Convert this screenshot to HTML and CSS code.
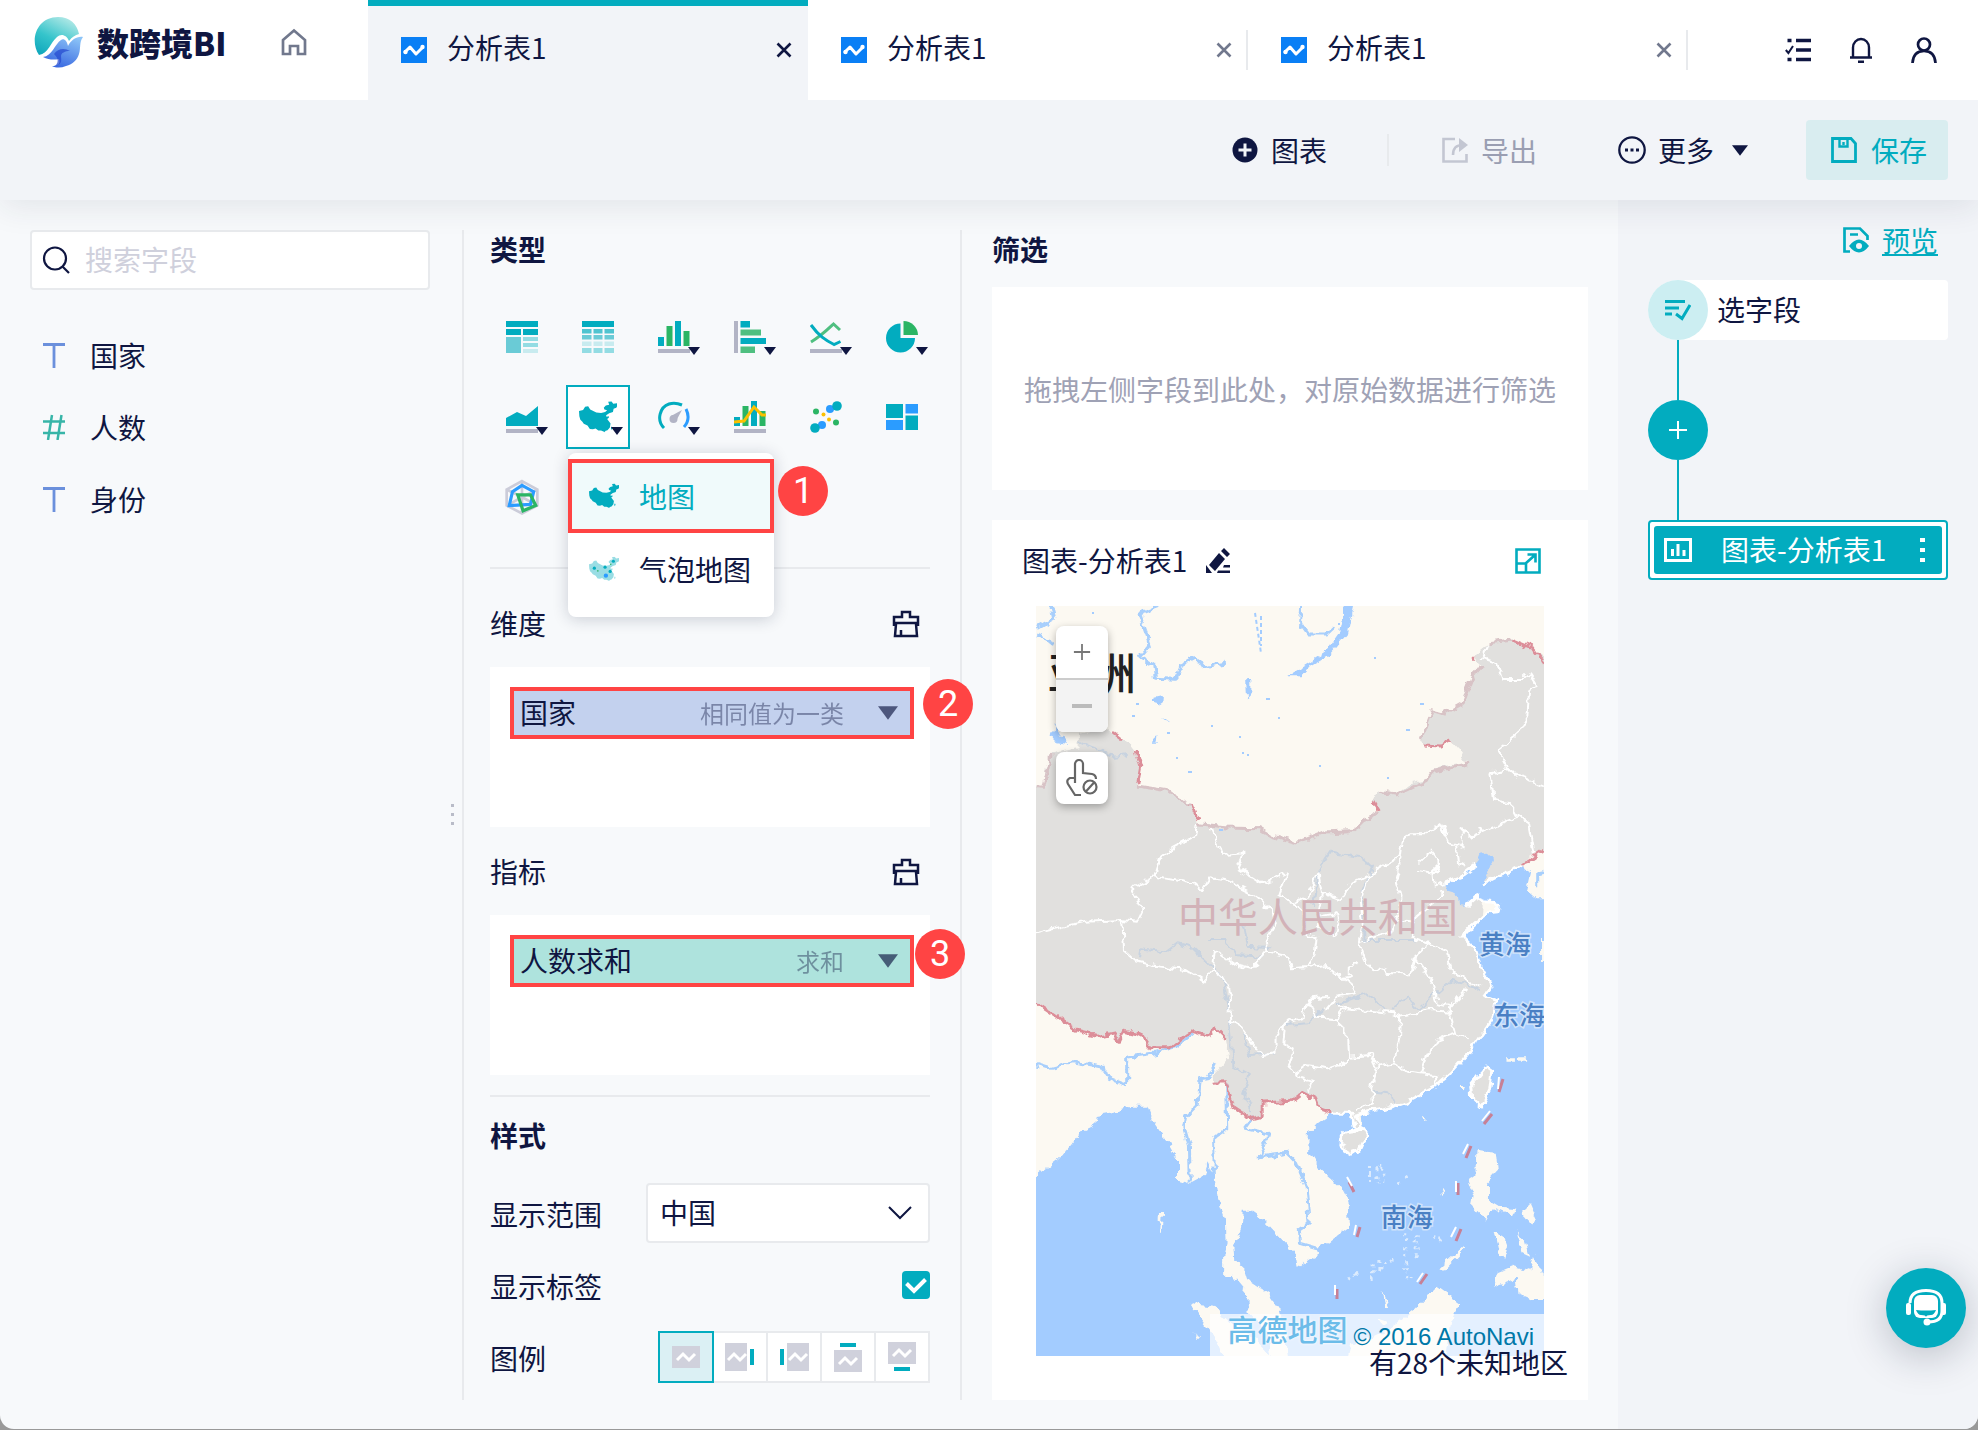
FILE: index.html
```html
<!DOCTYPE html>
<html lang="zh-CN">
<head>
<meta charset="utf-8">
<meta name="viewport" content="width=device-width, initial-scale=1">
<title>数跨境BI - 分析表1</title>
<link rel="stylesheet" href="styles.css">
</head>
<body>
<svg class="defs" aria-hidden="true">
  <defs>
    <symbol id="i-sheet" viewBox="0 0 26 26"><path fill="#0a7ff5" d="M0 0h26v26H0z"/><path d="M4 15l5-5 6 7 6-6" fill="none" stroke="#fff" stroke-width="3" stroke-linecap="round" stroke-linejoin="round"/><circle cx="4.500" cy="15" r="2.200" fill="#fff"/><circle cx="21.500" cy="10" r="2.200" fill="#fff"/></symbol>
    <symbol id="i-close" viewBox="0 0 16 16"><path d="M1.500 1.500l13 13M14.500 1.500l-13 13" fill="none" stroke="currentColor" stroke-width="2.600"/></symbol>
    <symbol id="i-caret" viewBox="0 0 12 8"><path d="M0 0h12L6 8z" fill="currentColor"/></symbol>
    <symbol id="i-china" viewBox="328 545 112 92"><path d="M328 573l12-3 6-9 9-2 6 10 18 9 14 1 12-3 6-5-8-2-2-5 6-7 10-2-3-9 10-1 5 7 12-2 1 6-4 8-8 3-2 9-11 4-9 6 1 4 7-1 0 4-5 4 10 13-2 12-7 8-12 4-7-3-8 0-8-6-8 2-9-1-7-10-11-5-4-6-6-6-3-10zM398 628l7-2 3 5-6 5zM424 619l3 2-2 8-3-4z"/></symbol>
    <symbol id="i-brush" viewBox="0 0 28 28"><path d="M2 16V7h8V2h8v5h8v9M2 13h24M4 14L3 26h22l-1-12M9 26v-6" fill="none" stroke="currentColor" stroke-width="2.500"/></symbol>
    <symbol id="i-plus" viewBox="0 0 20 20"><path d="M10 1v18M1 10h18" fill="none" stroke="currentColor" stroke-width="2"/></symbol>
  </defs>
</svg>

<div class="app">
  <header class="topbar">
    <a class="brand" href="#" aria-label="数跨境BI">
      <svg class="brand-mark" viewBox="0 0 52 52">
        <defs>
          <linearGradient id="g1" x1="0.8" y1="0" x2="0.2" y2="1"><stop offset="0" stop-color="#b9ebe8"/><stop offset="0.6" stop-color="#35c4cb"/><stop offset="1" stop-color="#12a9bd"/></linearGradient>
          <linearGradient id="g2" x1="0.8" y1="0" x2="0.3" y2="1"><stop offset="0" stop-color="#8cc4f7"/><stop offset="1" stop-color="#3766e0"/></linearGradient>
        </defs>
        <path d="M6 39C-4 24 4 1 25 1c12 0 19 7 21 17-4 1-7 3-10 7-2-6-8-8-12-4-7 6-8 16-18 18z" fill="url(#g1)"/>
        <path d="M10 41c9-1 12-13 18-17 3-2 6 1 7 6 3-6 9-10 15-9-4 5-2 11-4 17-2 6-6 10-13 12-5 2-10 2-14 0 5 0 9-2 7-7-5 1-10 1-16-2z" fill="url(#g2)"/>
        <path d="M21 38c4-6 11-6 16-3-5 0-9 2-9 5 0 4 2 8-6 10 5-5 2-9-1-12z" fill="#2347cf" opacity="0.700"/>
      </svg>
      <span class="brand-name">数跨境BI</span>
    </a>
    <a class="home" href="#" aria-label="首页"><svg width="26" height="28" viewBox="0 0 26 28"><path d="M2 12L13 2.500 24 12v14h-7v-8H9v8H2z" fill="none" stroke="#71788d" stroke-width="2.700"/></svg></a>
    <nav class="tabs">
      <div class="tab is-active"><svg class="ic26"><use href="#i-sheet"/></svg><a href="#">分析表1</a><button type="button" aria-label="关闭"><svg width="16" height="16"><use href="#i-close"/></svg></button></div>
      <div class="tab"><svg class="ic26"><use href="#i-sheet"/></svg><a href="#">分析表1</a><button type="button" aria-label="关闭"><svg width="16" height="16"><use href="#i-close"/></svg></button></div>
      <div class="tab"><svg class="ic26"><use href="#i-sheet"/></svg><a href="#">分析表1</a><button type="button" aria-label="关闭"><svg width="16" height="16"><use href="#i-close"/></svg></button></div>
    </nav>
    <div class="account">
      <button type="button" aria-label="任务"><svg class="ic26" viewBox="0 0 26 26"><path d="M11 3.500h15M11 13h15M11 22.500h15" stroke="currentColor" stroke-width="3.600"/><path d="M2.500 3.500h4M2.500 22.500h4" stroke="currentColor" stroke-width="3.600"/><path d="M.8 13l2.600 3L8 9" fill="none" stroke="currentColor" stroke-width="2"/></svg></button>
      <button type="button" aria-label="通知"><svg class="ic26" viewBox="0 0 26 26"><path d="M5 20V10.500a8 8.500 0 0 1 16 0V20M2 20.500h22M10 24.700h6" fill="none" stroke="currentColor" stroke-width="2.400"/></svg></button>
      <button type="button" aria-label="用户"><svg class="ic26" viewBox="0 0 26 26"><circle cx="13" cy="7.500" r="6" fill="none" stroke="currentColor" stroke-width="2.700"/><path d="M1.500 26c.5-8 5-12 11.500-12s11 4 11.500 12" fill="none" stroke="currentColor" stroke-width="2.700"/></svg></button>
    </div>
  </header>

  <div class="toolbar">
    <button type="button" class="tool"><svg class="ic26" viewBox="0 0 26 26"><circle cx="13" cy="13" r="12.500" fill="currentColor"/><path d="M13 6.500v13M6.500 13h13" stroke="#f2f4f8" stroke-width="3"/></svg>图表</button>
    <span class="tool-rule"></span>
    <button type="button" class="tool tool-off" disabled><svg class="ic26" viewBox="0 0 26 26"><path d="M13 2H1.500v22.500h23V17" fill="none" stroke="#c3c6d2" stroke-width="2.600"/><path d="M11 18c0-7 3-10 10-10" fill="none" stroke="#c3c6d2" stroke-width="2.600"/><path d="M17 1l9 7-9 7z" fill="#c3c6d2"/></svg>导出</button>
    <button type="button" class="tool tool-more"><svg width="28" height="28" viewBox="0 0 28 28"><circle cx="14" cy="14" r="12.700" fill="none" stroke="currentColor" stroke-width="2.300"/><path d="M7 14h3M12.500 14h3M18 14h3" stroke="currentColor" stroke-width="3"/></svg>更多<svg class="more-caret" width="16" height="11"><use href="#i-caret"/></svg></button>
    <button type="button" class="save"><svg class="ic26" viewBox="0 0 26 26"><path d="M1.500 1.500H20l4.500 5V24.500h-23z" fill="none" stroke="currentColor" stroke-width="2.800"/><path d="M8.500 2v7.500h8V2M12.500 5v3" fill="none" stroke="currentColor" stroke-width="2.400"/></svg>保存</button>
  </div>

  <main class="work">
    <aside class="fields">
      <label class="search"><svg width="28" height="28" viewBox="0 0 28 28"><circle cx="13" cy="12.500" r="11" fill="none" stroke="currentColor" stroke-width="2.200"/><path d="M20.500 20.500l6.500 6.500" stroke="currentColor" stroke-width="2.200"/></svg><input type="text" placeholder="搜索字段" aria-label="搜索字段"></label>
      <ul class="field-list">
        <li><svg class="fi fi-t" viewBox="0 0 22 26"><path d="M0 2.500h22M11 2v24" stroke="currentColor" stroke-width="2.800"/></svg>国家</li>
        <li><svg class="fi fi-n" viewBox="0 0 22 26"><path d="M0 7.500h22M0 19h22M9 1L5 26M18.500 1l-4 25" stroke="currentColor" stroke-width="2.500"/></svg>人数</li>
        <li><svg class="fi fi-t" viewBox="0 0 22 26"><path d="M0 2.500h22M11 2v24" stroke="currentColor" stroke-width="2.800"/></svg>身份</li>
      </ul>
      <span class="grip"><i></i><i></i><i></i></span>
    </aside>
    <div class="rule"></div>

    <section class="config">
      <h2>类型</h2>
      <div class="types">
        <button type="button" aria-label="分组表"><svg class="ic32" viewBox="0 0 32 32"><path fill="#02acbf" d="M0 0h32v6H0zM0 8h15v6H0zM17 8h15v6H17z"/><path fill="#6acbd6" d="M0 16h15v16H0z"/><path fill="#93dce3" d="M17 16h15v4H17zM17 22h15v4H17z"/><path fill="#c8ebef" d="M17 28h15v4H17z"/></svg></button>
        <button type="button" aria-label="明细表"><svg class="ic32" viewBox="0 0 32 32"><path fill="#02acbf" d="M0 0h32v6H0z"/><path fill="#4fc4d0" d="M0 8h9.500v4.500H0zM11.500 8h9v4.500h-9zM22.500 8H32v4.500h-9.500z"/><path fill="#6acbd6" d="M0 14h9.500v4.500H0zM11.500 14h9v4.500h-9zM22.500 14H32v4.500h-9.500z"/><path fill="#c8ebef" d="M0 20.500h9.500V25H0zM11.500 20.500h9V25h-9zM22.500 20.500H32V25h-9.500z"/><path fill="#93dce3" d="M0 27h9.500v5H0zM11.500 27h9v5h-9zM22.500 27H32v5h-9.500z"/></svg></button>
        <button type="button" aria-label="柱状图"><svg class="ic32" viewBox="0 0 32 32"><path fill="#02acbf" d="M0 16h6v9H0zM17 0h6v25h-6z"/><path fill="#2bb564" d="M8.500 5h6v20h-6zM25.500 10h6v15h-6z"/><path fill="#b2b4c5" d="M0 28h32v4H0z"/></svg><svg class="dd"><use href="#i-caret"/></svg></button>
        <button type="button" aria-label="条形图"><svg class="ic32" viewBox="0 0 32 32"><path fill="#b2b4c5" d="M0 0h4v32H0z"/><path fill="#02acbf" d="M6.500 0H16v6.500H6.500zM6.500 17H32v6H6.500z"/><path fill="#4fbf80" d="M6.500 8.500H27v6H6.500zM6.500 25.500H21V32H6.500z"/></svg><svg class="dd"><use href="#i-caret"/></svg></button>
        <button type="button" aria-label="折线图"><svg class="ic32" viewBox="0 0 32 32"><path d="M1 21c10-6 14-10 22.500-18L30 9" fill="none" stroke="#4fbf80" stroke-width="3"/><path d="M1 4c8 11 14 15 23 19.500l6.500-3" fill="none" stroke="#02acbf" stroke-width="3"/><path fill="#b2b4c5" d="M0 28h32v4H0z"/></svg><svg class="dd"><use href="#i-caret"/></svg></button>
        <button type="button" aria-label="饼图"><svg class="ic32" viewBox="0 0 32 32"><path fill="#02acbf" d="M14.500 2.500a14.500 14.500 0 1 0 14.500 14.500H14.500z"/><path fill="#2bb564" d="M17.500 0A14.500 14.500 0 0 1 32 14H17.500z"/></svg><svg class="dd"><use href="#i-caret"/></svg></button>

        <button type="button" aria-label="面积图"><svg class="ic32" viewBox="0 0 32 32"><path fill="#02acbf" d="M0 17L11 11l9 4L32 5v20H0z"/><path fill="#b2b4c5" d="M0 28h32v4H0z"/></svg><svg class="dd"><use href="#i-caret"/></svg></button>
        <div class="type-open">
          <button type="button" class="is-on" aria-label="地图" aria-expanded="true"><svg class="china-lg"><use href="#i-china"/></svg><svg class="dd"><use href="#i-caret"/></svg></button>
          <div class="menu">
            <button type="button" class="menu-item marked"><svg class="china-sm"><use href="#i-china"/></svg>地图</button>
            <button type="button" class="menu-item"><svg class="china-sm" viewBox="328 545 112 92"><use href="#i-china" x="328" y="545" width="112" height="92" fill="#99dde4"/><circle cx="348" cy="588" r="6" fill="#02acbf"/><circle cx="419" cy="562" r="6" fill="#02acbf"/><circle cx="388" cy="584" r="6" fill="#02acbf"/><circle cx="407" cy="600" r="6" fill="#02acbf"/><circle cx="391" cy="616" r="8" fill="#2b9cff"/><circle cx="361" cy="598" r="3" fill="#2bb564"/><circle cx="409" cy="573" r="3" fill="#2bb564"/></svg>气泡地图</button>
            <span class="badge badge-1">1</span>
          </div>
        </div>
        <button type="button" aria-label="仪表盘"><svg class="ic32" viewBox="0 0 32 32"><path d="M6 27C-2 19 2 6 11 3q6-2 13 1" fill="none" stroke="#02acbf" stroke-width="3"/><path d="M28 8q5 10-2 18" fill="none" stroke="#2b9cff" stroke-width="3"/><path d="M13 15l11-6-6 11z" fill="#b2b4c5"/><circle cx="15.500" cy="18" r="4" fill="#b2b4c5"/></svg><svg class="dd"><use href="#i-caret"/></svg></button>
        <button type="button" aria-label="组合图"><svg class="ic32" viewBox="0 0 32 32"><path fill="#02acbf" d="M0 16h6v9H0zM17 0h6v25h-6z"/><path fill="#2bb564" d="M8.500 5h6v20h-6zM25.500 10h6v15h-6z"/><path d="M0 21l10-1L20 6l8 8h4" fill="none" stroke="#fbc000" stroke-width="3"/><path fill="#b2b4c5" d="M0 28h32v4H0z"/></svg></button>
        <button type="button" aria-label="散点图"><svg class="ic32" viewBox="0 0 32 32"><g fill="#2b9cff"><circle cx="20" cy="8" r="4"/><circle cx="12" cy="24" r="4"/></g><g fill="#02acbf"><circle cx="27" cy="5" r="4.800"/><circle cx="5" cy="27" r="4.800"/></g><g fill="#2bb564"><circle cx="6" cy="10.500" r="3"/><circle cx="26" cy="21.500" r="3"/></g><g fill="#fbc000"><circle cx="13.500" cy="13.500" r="2"/><circle cx="19" cy="18.500" r="2"/></g></svg></button>
        <button type="button" aria-label="矩形树图"><svg class="ic32" viewBox="0 0 32 32"><path fill="#02acbf" d="M0 3h17v14H0zM19.500 14.500H32V29H19.500z"/><path fill="#2b9cff" d="M19.500 3H32v9.500H19.500zM0 19h17v10H0z"/></svg></button>

        <button type="button" aria-label="雷达图"><svg class="radar" viewBox="0 0 32 34"><path d="M16 2l14.500 8v15L16 32.500 1.500 25V10zM16 2v15M1.500 10L16 17l14.500-7M16 17v15M16 17L2 25M16 17l14 8" fill="none" stroke="#cbccd9" stroke-width="2.500"/><path d="M16 6l11 6-3 12-20 1 3-13z" fill="none" stroke="#2b9cff" stroke-width="3"/><path d="M12 15h12l5 10-12 5z" fill="none" stroke="#2bb564" stroke-width="3"/></svg></button>
      </div>
      <hr class="hr-type">

      <div class="zone-head"><h3>维度</h3><button type="button" aria-label="清空维度"><svg width="28" height="28"><use href="#i-brush"/></svg></button></div>
      <div class="zone"><div class="chip chip-dim"><span>国家</span><small>相同值为一类</small><svg width="20" height="14"><use href="#i-caret" /></svg><span class="badge badge-2">2</span></div></div>
      <div class="zone-head zone-head-next"><h3>指标</h3><button type="button" aria-label="清空指标"><svg width="28" height="28"><use href="#i-brush"/></svg></button></div>
      <div class="zone"><div class="chip chip-num"><span>人数求和</span><small>求和</small><svg width="20" height="14"><use href="#i-caret"/></svg><span class="badge badge-3">3</span></div></div>

      <hr class="hr-style">
      <h2>样式</h2>
      <div class="style-rows">
        <div class="row"><label for="scope">显示范围</label><span class="select"><select id="scope"><option>中国</option><option>世界</option></select><svg width="24" height="14" viewBox="0 0 24 14"><path d="M1 1l11 11L23 1" fill="none" stroke="currentColor" stroke-width="2"/></svg></span></div>
        <div class="row"><label for="show-label">显示标签</label><span class="check"><input id="show-label" type="checkbox" checked><svg width="28" height="28" viewBox="0 0 28 28"><path d="M4.500 12.500l7.500 7.500L23.500 8.500" fill="none" stroke="#fff" stroke-width="4"/></svg></span></div>
        <div class="row"><span class="row-name">图例</span>
          <div class="legend" role="radiogroup" aria-label="图例">
            <label><input type="radio" name="legend" checked aria-label="无"><svg viewBox="0 0 30 30"><path fill="#d0d1dc" d="M1 4h28v22H1z"/><path d="M6 18l6-6 6 6 6-6" fill="none" stroke="#fff" stroke-width="3"/></svg></label>
            <label><input type="radio" name="legend" aria-label="右"><svg viewBox="0 0 30 30"><path fill="#d0d1dc" d="M0 1h22v28H0z"/><path d="M3 18l6-6 6 6 6-6" fill="none" stroke="#fff" stroke-width="3"/><path fill="#02acbf" d="M25 7h4v16h-4z"/></svg></label>
            <label><input type="radio" name="legend" aria-label="左"><svg viewBox="0 0 30 30"><path fill="#d0d1dc" d="M8 1h22v28H8z"/><path d="M10 18l6-6 6 6 6-6" fill="none" stroke="#fff" stroke-width="3"/><path fill="#02acbf" d="M1 7h4v16H1z"/></svg></label>
            <label><input type="radio" name="legend" aria-label="上"><svg viewBox="0 0 30 30"><path fill="#d0d1dc" d="M1 8h28v22H1z"/><path d="M6 22l6-6 6 6 6-6" fill="none" stroke="#fff" stroke-width="3"/><path fill="#02acbf" d="M7 1h16v4H7z"/></svg></label>
            <label><input type="radio" name="legend" aria-label="下"><svg viewBox="0 0 30 30"><path fill="#d0d1dc" d="M1 0h28v22H1z"/><path d="M6 14l6-6 6 6 6-6" fill="none" stroke="#fff" stroke-width="3"/><path fill="#02acbf" d="M7 25h16v4H7z"/></svg></label>
          </div>
        </div>
      </div>
    </section>
    <div class="rule"></div>

    <section class="canvas">
      <h2>筛选</h2>
      <div class="filter-drop">拖拽左侧字段到此处，对原始数据进行筛选</div>
      <article class="chart">
        <header class="chart-head">
          <h3>图表-分析表1</h3>
          <button type="button" aria-label="重命名"><svg class="ic26" viewBox="0 0 26 26"><path d="M4 17L14 5l6 6-10 12zM16 3l3-3 6 6-3 3z" fill="currentColor"/><path d="M1 17v8h6zM13 22.500h12v2.500H12zM19 17h6v2.500h-7z" fill="currentColor"/></svg></button>
          <button type="button" class="expand" aria-label="放大"><svg class="ic26" viewBox="0 0 26 26"><path d="M1.500 1.500h23v23h-23zM1.500 15.500h9.500v9M10 16L20 7M12.500 6.500h8v8" fill="none" stroke="currentColor" stroke-width="2.600"/></svg></button>
        </header>
        <div class="map">
          <svg class="map-svg" viewBox="0 0 508 750" preserveAspectRatio="xMidYMid slice" role="img" aria-label="中国地图">
            <defs><filter id="rough" x="-5%" y="-5%" width="110%" height="110%"><feTurbulence type="fractalNoise" baseFrequency="0.12" numOctaves="2" seed="4" result="n"/><feDisplacementMap in="SourceGraphic" in2="n" scale="9" xChannelSelector="R" yChannelSelector="G"/></filter></defs>
            <path fill="#fcf9f2" d="M0 0h508v750H0z"/>
            <g class="geo" filter="url(#rough)">
              <!-- southern half: seas and land -->
              <g transform="translate(0 394) scale(.3827 .3333) translate(-94 0)">
                <path class="sea" d="M1290-30L1285 60 1225 160 1180 220 1135 265 1050 315 945 345 948 385 925 380 918 345 868 340 830 370 807 400 805 455 830 500 890 560 908 600 912 680 850 735 825 745 832 760 780 800 775 765 730 710 690 660 655 632 634 632 632 680 610 740 612 780 640 810 648 840 700 880 730 930 745 1000 760 1110H900L915 1040 1010 990 1080 930 1140 860 1200 910 1180 960 1160 1110H1470V-30z"/>
                <path class="sea" d="M50 570L94 530 160 470 210 400 245 380 250 345 300 335 345 320 385 320 400 365 440 430 465 480 465 540 495 550 535 525 545 490 560 530 570 600 590 660 592 730 583 770 583 825 605 825 645 880 650 940 700 1000 715 1110H50z"/>
                <path class="land" d="M492 905L520 915 560 920 600 970 650 1000 710 1068 720 1110H600L560 1010 520 950z"/>
                <path class="china" d="M50-60V-20L94 0 145 40 200 85 260 105 300 95 310 125 325 90 375 105 395 140 445 140 500 90 545 105 560 80 590 115 596 175 558 225 565 250 590 245 610 320 640 340 665 355 685 350 685 305 760 300 790 275 825 295 835 325 868 340 920 340 925 380 945 385 930 345 1050 312 1135 262 1180 217 1225 158 1285 58 1295-60z"/>
                <path class="coast-line" d="M868 340L920 340 925 380 945 385 930 345 1050 312 1135 262 1180 217 1225 158 1285 58 1295-10"/>
                <path class="china coast" d="M1270 198L1285 210 1280 270 1258 322 1232 290 1230 255zM905 395L950 388 958 405 940 450 915 460 888 440 890 410z"/>
                <path class="land" d="M1245 450L1298 455 1303 510 1275 545 1275 600 1305 620 1350 625 1340 650 1290 625 1270 665 1235 620 1240 590 1225 540 1242 525zM1290 700l30 10 10 30-10 40-20-25zM1350 690l25 40 10 40-20-10zM1385 615l15 40-12 20-25-35zM1290 860L1300 820 1340 800 1385 815 1395 765 1425 830 1440 900 1395 900 1355 880 1350 835zM1148 805L1215 735 1222 740 1160 812z"/>
                <path class="land" d="M1326 175h22v10h-22zM1356 172h16v10h-16zM1100 350l16 6-6 8zM1205 255l10 0-4 22zM1155 560l12 16-6 6zM418 636h8l-4 62h-6zM1000 870l16 50-10 2zM985 955l30 10-15 12zM505 1000l20 12-5 6z"/>
                <path class="isle" d="M968 495v60M985 505v45M1000 500v45M1040 550l30-20M1060 700v140M1090 700v80M1130 710l30 10M1070 830l10 10M975 790v50M990 780v30M910 835l30-15M1005 790l20-10"/>
                <path class="river" d="M94 190L130 203 190 185 265 200 285 235 330 255M331 255V172L400 160 460 140 505 100M565 190L545 235 520 240 515 315 485 350 480 380 495 440 497 545M592 250L595 385 558 415 560 525M660 350L638 385 700 400 680 470 750 460 775 490 800 560 808 670 782 690 785 730 830 745"/>
                <path class="river faint" d="M598 60L610 200 650 225 635 280 655 330M640 100L650 165 720 160M745 75l60-5 40-40M975 275l45 5 10 30"/>
                <path class="prov" d="M598-10L602 70 620 65 685 165 720 155 720 110 745 70 790 55 800 0M745 70L740 130 765 145 755 190 775 230 815 245 805 275M800 0L830 50 880 55 900 25 880 0M880 55L910 120 912 185 860 205 800 195 770 220M912 170L970 165 985 200 970 265 975 310 930 330M900 25L1030 40 1048 50 1045 110 1030 190 985 200M1048 50L1120 30 1175 35 1190 100 1225 115M1030 190L1065 215 1100 220 1115 170 1140 120 1190 100M1100 220L1135 225 1140 260M1175 35L1180 0"/>
                <path class="border" d="M94 5L145 45 200 90 260 108 300 98 310 130 325 94 375 108 395 143 445 143 500 93 545 108 560 84 590 118M558 250L590 248 610 322 640 344 665 358 685 352 685 309 760 304 790 278 825 298 835 328 868 340"/>
              </g>
              <!-- northern half -->
              <g transform="scale(.37 .3333) translate(-97 -48)">
                <path class="china" d="M60 588L118 590 122 545 138 490 212 475 213 432 290 415 310 435 350 465 368 490 378 530 370 585 455 600 500 635 515 640 535 700 610 710 700 712 735 735 800 755 850 735 875 722 950 718 985 690 1022 662 1008 635 1022 600 1075 610 1110 580 1150 570 1170 540 1200 528 1265 518 1240 480 1218 452 1190 468 1145 465 1138 450 1168 360 1200 370 1248 340 1255 305 1275 260 1298 225 1280 195 1320 160 1385 150 1440 175 1520 240V760L1471 780 1430 800 1405 830 1340 865 1310 885 1300 1000 1335 1235H60z"/>
                <path class="sea" d="M1405 832L1340 862 1305 882 1325 835 1335 803 1315 788 1298 792 1285 825 1245 860 1200 880 1210 905 1240 915 1243 945 1262 948 1290 920 1310 935 1350 940 1345 965 1320 968 1295 990 1275 1010 1250 1040 1285 1080 1300 1130 1330 1190 1310 1220 1345 1235 1330 1290H1520V925L1450 925 1425 900 1435 850z"/>
                <path class="coast-line" d="M1405 832L1340 862 1305 882M1200 880L1245 860 1285 825M1262 948L1290 920 1310 935 1350 940 1345 965 1320 968 1295 990 1275 1010 1250 1040 1285 1080 1300 1130 1330 1190 1310 1220 1345 1235"/>
                <path class="land" d="M1405 832L1520 760V930L1455 920 1428 905 1438 850zM1462 1050h20v60h-20z"/>
                <path class="sea" d="M935 30H960L940 130 885 200 840 230 815 262 772 262 840 215 880 185 915 130zM665 270h14v35l-12 15zM420 320l20-5-2 30-18-5zM148 405l14 30 22 30-30-5-12-20zM408 455l20-20-2 20zM436 385l25 12-20-4z"/>
                <path class="river" d="M135 45L145 85 97 115M97 135L150 160M430 48L375 70 405 165 378 200 415 225 420 265 475 268 490 225 530 200 550 230 610 220M815 48L812 100 835 135 880 135 905 110M1471 845l-18 5v45"/>
                <path class="river faint" d="M215 455L310 500 345 495M375 1105L380 1075 450 1085 480 1060 515 1070 600 1160 620 1260M565 1050l45 0 25 45 75 5M845 950L865 830 890 788 970 800 1005 830 980 900 985 1050 1125 1050M660 1010l10 60 60 5M910 1240l80-30 50 50M1060 1260l40-40 30 40 90-90 80 30"/>
                <path class="prov" d="M97 1030L130 1020 230 995 330 990 335 1080 370 1115 430 1130 500 1140 550 1175 575 1140 580 1080 630 1120 680 1135 720 1085 780 1100 790 1135 840 1130 880 1125 920 1165 960 1185 955 1210 910 1220 880 1260M535 700L530 735 470 770 435 800 418 860 355 895 385 960 370 995 330 990M418 860L520 880 545 905 565 865 610 870 690 915 735 960 745 1000 715 1060 720 1085M565 700L585 760 605 795 655 790 640 830 710 880 775 850 755 915 790 940 820 970 825 1030 855 1045 850 1100 830 1130M790 940L830 920 860 850 870 910 920 930 950 880 1020 840 1080 800 1085 760 1105 730 1150 730 1190 705 1215 760 1250 770 1250 720 1270 740 1330 710 1400 680 1380 640 1335 630 1325 550 1385 540 1400 560 1471 585M1000 850L975 930 980 1000 970 1055 990 1125 1050 1150 1110 1150 1130 1085 1160 1060 1110 1040 1125 980 1200 910M1085 800L1070 860 1085 920 1070 990 1060 1025 970 1055M1070 990l55 5M870 910L860 980 910 970 920 1020 895 1040 860 1000M1130 820L1165 785 1190 820 1175 850 1130 840M1190 820L1170 840 1175 890 1200 880M1235 770L1240 820 1260 830M1400 680L1430 700 1445 790M1400 560L1370 530 1345 480 1400 430 1425 380 1430 300 1450 285 1430 250 1410 270 1360 270 1345 220 1305 205 1320 165M970 1115L945 1130 945 1160 920 1165M1160 1060L1210 1085 1220 1140 1260 1175 1300 1190M1110 1150L1120 1100 1170 1180 1180 1240M1180 1240L1220 1250 1260 1200M575 1140L600 1160 620 1200 622 1260M820 1260L840 1225 890 1220"/>
                <path class="halo" d="M370 588L455 603 500 638 515 643M535 704L610 714 700 716 735 739 800 759 875 726 950 722 985 694 1022 666M1022 604L1075 614 1150 574 1170 544 1265 522M1138 450L1168 362 1200 372 1248 342 1275 262 1298 227M97 590l21 2 20-100M1320 158l65-8"/>
                <path class="border" d="M368 485L380 530 372 580M305 430l25 20M515 640l20 50M1008 635l14 25M1145 465l45 3 28-16M1272 205h12M1385 150l55 25 31 45M1405 830l66-52"/>
              </g>
            </g>
            <g class="dots"><path d="M219 7l3 20 3 20M225 10v30M56 7h2M302 18h2M338 52h2M242 112h2M175 120h2M203 131h2M206 147h2M140 152h2M283 160h2M351 172h2M211 149h2M183 224h4M152 166h4M116 94h2M100 98h3M131 127h3M96 110h3M384 98h4M370 124h4M230 93h4"/></g>
            <!-- dashed maritime line -->
            <g class="nine"><path d="M467 473l-4 13M456 508l-8 10M435 540l-5 12M422 577v12M425 623l-5 12M391 668l-7 10M301 683v10M324 621l-3 10M313 576l5 10"/><path class="nine-w" d="M463 471l-1 12M454 505l-8 10M432 538l-5 10M420 575v11M420 621l-5 10M387 667l-6 9M299 679v10M320 619l-2 10M311 571l5 9"/></g>
            <text class="t-asia" x="12" y="84">亚洲</text>
            <text class="t-cn" x="142" y="326">中华人民共和国</text>
            <text class="t-sea" x="443" y="348">黄海</text>
            <text class="t-sea" x="457" y="419">东海</text>
            <text class="t-sea" x="345" y="621">南海</text>
          </svg>
          <div class="zoom-ctl"><button type="button" aria-label="放大地图"><svg width="18" height="18"><use href="#i-plus"/></svg></button><button type="button" disabled aria-label="缩小地图"><svg width="20" height="4" viewBox="0 0 20 4"><path d="M0 0h20v4H0z" fill="#bbb"/></svg></button></div>
          <button type="button" class="hand" aria-label="禁用拖拽"><svg width="34" height="38" viewBox="0 0 34 38"><path d="M10 24V5a4 4 0 0 1 8 0v9l9 1q4 1 4 5M10 19l-5 0q-4 2-2 6l7 11h6" fill="none" stroke="#666" stroke-width="2.200"/><circle cx="25" cy="28" r="6.500" fill="none" stroke="#666" stroke-width="2.200"/><path d="M20.500 33l9-10" stroke="#666" stroke-width="2.200"/></svg></button>
          <div class="credit"><b>高德地图</b><a href="#">© 2016 AutoNavi</a></div>
        </div>
        <p class="unknown">有28个未知地区</p>
      </article>
    </section>

    <aside class="flow">
      <a class="preview" href="#"><svg class="ic26" viewBox="0 0 26 26"><path d="M7 24.500H1.500v-23H17l7.500 7.500v4M7 7.500h8" fill="none" stroke="currentColor" stroke-width="2.700"/><path fill="currentColor" fill-rule="evenodd" d="M6 19q10-13 20 0-10 13-20 0zm13 0a3 3 0 1 0-6 0 3 3 0 0 0 6 0z"/></svg><span>预览</span></a>
      <div class="step"><span class="step-dot"><svg class="ic26" viewBox="0 0 26 20"><path d="M0 1.500h20M0 8h14M0 14h7M11 14l6 4.500L25 5" fill="none" stroke="currentColor" stroke-width="3"/></svg></span><span class="step-name">选字段</span></div>
      <span class="link"></span>
      <button type="button" class="add" aria-label="添加步骤"><svg width="20" height="20"><use href="#i-plus"/></svg></button>
      <span class="link"></span>
      <div class="node"><button type="button" class="node-in"><svg width="28" height="24" viewBox="0 0 28 24"><path d="M1.500 1.500h25v21h-25z" fill="none" stroke="#fff" stroke-width="3"/><path d="M8.500 11v7M14 6v12M20 12v6" stroke="#fff" stroke-width="3"/></svg><span>图表-分析表1</span><svg width="6" height="26" viewBox="0 0 6 26"><path d="M0 1h5v4H0zM0 11h5v4H0zM0 21h5v4H0z" fill="#fff"/></svg></button></div>
    </aside>
  </main>
</div>

<button type="button" class="support" aria-label="在线客服"><svg width="40" height="38" viewBox="0 0 40 38"><path d="M4 14C4 5 10 1.500 20 1.500S36 5 36 14v8q0 11-14 11" fill="none" stroke="#fff" stroke-width="3"/><rect x="0" y="14" width="5" height="12" rx="2" fill="#fff"/><rect x="35" y="14" width="5" height="12" rx="2" fill="#fff"/><rect x="8" y="6" width="24" height="23" rx="6" fill="#fff"/><path d="M10 21q10 1 20 0-2 5-5 5-5 0-5 2 0-2-5-2-3 0-5-5z" fill="#02acbf"/><circle cx="21" cy="33" r="3.500" fill="#fff"/></svg></button>
</body>
</html>
```
FILE: styles.css
```css
:root {
  --teal: #02acbf;
  --ink: #0f1641;
  --line: #e8eaed;
  --page: #f7f9fb;
  --panel: #f2f4f8;
  --red: #ff4444;
}

* { box-sizing: border-box; }

body {
  margin: 0;
  background: #999;
  color: var(--ink);
  font: 400 28px/40px "Noto Sans CJK SC", "Noto Sans", sans-serif;
}

button, input, select { font: inherit; color: inherit; }
button { border: 0; padding: 0; background: none; cursor: pointer; }
a { color: inherit; text-decoration: none; }
h2, h3, p, ul { margin: 0; padding: 0; }
h2 { height: 40px; font-size: 28px; line-height: 38px; font-weight: 700; }
h3 { height: 40px; font-size: 28px; line-height: 38px; font-weight: inherit; }
svg { display: block; flex: none; }

.defs { position: absolute; width: 0; height: 0; }
.ic26 { width: 26px; height: 26px; }
.ic32 { width: 32px; height: 32px; }
.radar { width: 34px; height: 36px; }

.app {
  display: flex;
  flex-direction: column;
  min-height: calc(100vh - 1px);
  margin-bottom: 1px;
  background: var(--page);
  border-radius: 0 0 14px 14px;
  overflow: hidden;
}

/* top bar */
.topbar { position: relative; z-index: 2; display: flex; height: 100px; background: #fff; }
.brand { display: flex; width: 281px; padding: 16px 0 0 33px; gap: 12px; }
.brand-mark { width: 52px; height: 52px; }
.brand-name { font-size: 32px; line-height: 52px; font-weight: 900; }
.home { width: 87px; padding-top: 28px; }
.tabs { display: flex; flex: 0 1 1320px; min-width: 0; }
.tab {
  position: relative;
  display: flex;
  flex: 1 1 0;
  align-items: center;
  padding: 0 16px 6px 33px;
}
.tab a { flex: 1; margin-left: 20px; }
.tab svg { margin-top: 6px; }
.tab button { color: #71788d; }
.tab + .tab::after {
  content: "";
  position: absolute;
  top: 30px;
  right: 0;
  width: 2px;
  height: 40px;
  background: var(--line);
}
.tab.is-active { background: var(--panel); box-shadow: inset 0 6px var(--teal); }
.tab.is-active button { color: var(--ink); }
.account {
  display: flex;
  align-items: center;
  gap: 37px;
  margin-left: auto;
  padding-right: 41px;
}

/* toolbar */
.toolbar {
  position: relative;
  z-index: 1;
  display: flex;
  align-items: center;
  justify-content: flex-end;
  height: 100px;
  padding-right: 30px;
  background: var(--panel);
  box-shadow: 0 8px 30px rgba(30, 40, 70, 0.09);
}
.tool { display: flex; align-items: center; gap: 13px; }
.tool-rule { width: 2px; height: 32px; margin: 0 53px 0 60px; background: var(--line); }
.tool-off { color: #9a9eb2; }
.tool-more { margin: 0 58px 0 81px; gap: 12px; }
.more-caret { margin-left: 6px; }
.save {
  display: flex;
  align-items: center;
  justify-content: center;
  gap: 14px;
  width: 142px;
  height: 60px;
  padding-left: 4px;
  border-radius: 4px;
  background: #d9edf0;
  color: var(--teal);
}

/* work area */
.work { display: flex; flex: 1; }
.rule { flex: none; width: 2px; margin: 30px 0 29px; background: var(--line); }

.fields { position: relative; flex: none; width: 462px; padding: 30px 32px 0 30px; }
.search {
  display: flex;
  align-items: center;
  height: 60px;
  padding: 0 10px;
  gap: 15px;
  border: 2px solid var(--line);
  border-radius: 4px;
  background: #fff;
}
.search input { flex: 1; min-width: 0; border: 0; padding: 0 0 2px; outline: 0; background: none; }
.search input::placeholder { color: #cfd0dc; opacity: 1; }
.field-list { margin-top: 29px; padding-left: 13px; list-style: none; }
.field-list li { display: flex; align-items: center; gap: 25px; height: 72px; }
.fi { width: 22px; height: 26px; }
.fi-t { color: #6b90dc; }
.fi-n { color: #37b5a8; }
.grip { position: absolute; top: 604px; right: 8px; display: grid; gap: 6px; }
.grip i { width: 3px; height: 3px; background: #b9bcc8; }

/* configuration column */
.config { flex: none; width: 496px; padding: 30px 30px 29px 26px; }
.types {
  display: grid;
  grid-template-columns: repeat(6, 64px);
  grid-auto-rows: 64px;
  justify-content: start;
  gap: 16px 12px;
  margin-top: 35px;
}
.types > button, .is-on {
  position: relative;
  display: flex;
  width: 64px;
  height: 64px;
  align-items: center;
  justify-content: center;
}
.type-open { position: relative; z-index: 2; }
.is-on { border: 2px solid var(--teal); background: #fff; }
.dd { position: absolute; right: 6px; bottom: 14px; width: 12px; height: 8px; }
.is-on .dd { right: 5px; bottom: 12px; }
.china-lg { width: 38px; height: 32px; fill: var(--teal); }
.china-sm { width: 30px; height: 26px; fill: var(--teal); }
.menu {
  position: absolute;
  top: 68px;
  left: 2px;
  width: 206px;
  height: 164px;
  padding: 6px 0;
  border-radius: 8px;
  background: #fff;
  box-shadow: 0 2px 16px rgba(20, 30, 60, 0.2);
}
.menu-item { display: flex; align-items: center; width: 100%; height: 72px; padding-left: 21px; gap: 20px; }
.menu-item.marked {
  height: 74px;
  padding-left: 17px;
  border: 4px solid var(--red);
  background: #f0fafb;
  color: var(--teal);
}
.badge {
  position: absolute;
  width: 50px;
  height: 50px;
  border-radius: 50%;
  background: var(--red);
  color: #fff;
  font: 36px/50px Roboto, sans-serif;
  text-align: center;
}
.badge-1 { left: 210px; top: 13px; }
.badge-2 { right: -63px; top: -12px; }
.badge-3 { right: -55px; top: -10px; }

hr { height: 2px; margin: 0; border: 0; background: var(--line); }
.hr-type { margin-top: 38px; }
.hr-style { margin: 20px 0 19px; }
.zone-head { display: flex; align-items: center; justify-content: space-between; margin: 35px 10px 23px 0; }
.zone-head-next { margin-top: 25px; }
.zone { height: 160px; padding: 20px 16px 0 20px; background: #fff; }
.chip {
  position: relative;
  display: flex;
  align-items: center;
  height: 52px;
  padding: 0 12px 0 6px;
  border: 4px solid var(--red);
}
.chip span:first-child { flex: 1; padding-bottom: 2px; }
.chip small { margin-right: 34px; font-size: 24px; opacity: 0.4; }
.chip > svg { opacity: 0.65; }
.chip-dim { background: #c3d1ee; }
.chip-num { background: #aee3dd; }

.style-rows { display: grid; gap: 12px; margin-top: 27px; }
.row { display: flex; align-items: center; justify-content: space-between; height: 60px; }
.row > label, .row-name { padding-top: 2px; }
.select { position: relative; width: 284px; height: 60px; }
.select select {
  width: 100%;
  height: 100%;
  padding: 0 12px 2px;
  border: 2px solid var(--line);
  border-radius: 4px;
  background: #fff;
  appearance: none;
}
.select svg { position: absolute; right: 18px; top: 23px; pointer-events: none; }
.check { position: relative; width: 28px; height: 28px; }
.check input { display: block; width: 28px; height: 28px; margin: 0; border-radius: 4px; background: var(--teal); appearance: none; }
.check svg { position: absolute; inset: 0; pointer-events: none; }
.check input:not(:checked) + svg { display: none; }
.legend { display: flex; }
.legend label {
  display: grid;
  place-items: center;
  width: 56px;
  height: 52px;
  margin-left: -2px;
  border: 2px solid var(--line);
  background: #fff;
}
.legend label:has(:checked) { position: relative; border-color: var(--teal); background: #dbf0f4; }
.legend input { position: absolute; opacity: 0; pointer-events: none; }
.legend svg { width: 30px; height: 30px; }

/* chart column */
.canvas { display: flex; flex: 1; flex-direction: column; min-width: 0; padding: 30px 30px 29px; }
.filter-drop {
  display: flex;
  align-items: center;
  justify-content: center;
  height: 203px;
  margin: 17px 0 30px;
  background: #fff;
  color: #9fa2b5;
  white-space: nowrap;
}
.chart { position: relative; flex: 1; padding: 21px 30px 44px; background: #fff; }
.chart-head { display: flex; align-items: center; gap: 18px; height: 40px; }
.expand { margin: 0 17px 0 auto; color: var(--teal); }
.map { position: relative; height: 750px; margin: 25px 14px 0; overflow: hidden; }
.map-svg { width: 100%; height: 100%; }
.geo path { vector-effect: non-scaling-stroke; stroke-linejoin: round; }
.sea { fill: #a3ccff; }
.land { fill: #fcf9f2; }
.china { fill: #e1e0de; }
.coast { stroke: #fff; stroke-width: 3px; }
.coast-line { fill: none; stroke: #fff; stroke-width: 3px; }
.prov { fill: none; stroke: #fff; stroke-width: 2px; }
.river { fill: none; stroke: #a8cffc; stroke-width: 3px; }
.faint { stroke: #c8d3e0; stroke-width: 2px; }
.halo { fill: none; stroke: #d8c3c6; stroke-width: 3px; }
.border { fill: none; stroke: #dc8e99; stroke-width: 3px; }
.isle { fill: none; stroke: #dcebfd; stroke-width: 3px; stroke-dasharray: 3 4; }
.dots { fill: none; stroke: #a3ccff; stroke-width: 2px; }
.dots path { stroke-dasharray: 4 3; }
.nine { fill: none; stroke: #c78096; stroke-width: 3px; }
.nine-w { stroke: #fff; stroke-width: 2px; }
.t-asia { fill: #222; font-size: 44px; font-weight: 500; }
.t-cn { fill: #d2b2b8; font-size: 40px; }
.t-sea { fill: #4a80c4; stroke: #cfe3fb; stroke-width: 3px; paint-order: stroke; font-size: 26px; font-weight: 500; }

.zoom-ctl, .hand {
  position: absolute;
  left: 20px;
  width: 52px;
  border-radius: 8px;
  background: #fff;
  box-shadow: 0 3px 8px rgba(0, 0, 0, 0.3);
  color: #777;
}
.zoom-ctl { top: 20px; overflow: hidden; }
.zoom-ctl button { display: grid; place-items: center; width: 52px; height: 52px; }
.zoom-ctl button + button { height: 54px; border-top: 2px solid #ccc; background: #f3f3f3; }
.hand { top: 146px; display: grid; place-items: center; height: 52px; }
.credit {
  position: absolute;
  right: 0;
  bottom: 0;
  display: flex;
  gap: 6px;
  height: 42px;
  padding: 0 10px 0 18px;
  background: rgba(255, 255, 255, 0.7);
}
.credit b { color: #6cbce9; font-size: 30px; line-height: 28px; font-weight: 500; text-shadow: 0 0 3px #fff; }
.credit a { color: #0078a8; font: 24px/46px "Liberation Sans", sans-serif; }
.unknown { position: absolute; right: 20px; bottom: 24px; line-height: 28px; }

/* flow column */
.flow { flex: none; width: 360px; padding: 20px 30px 0; background: var(--panel); }
.preview { display: flex; align-items: center; justify-content: flex-end; gap: 13px; height: 40px; padding-right: 10px; color: var(--teal); }
.preview span { text-decoration: underline; text-decoration-thickness: 2px; text-underline-offset: 2px; }
.step { display: flex; align-items: center; gap: 9px; height: 60px; margin-top: 20px; border-radius: 30px 4px 4px 30px; background: #fff; }
.step-dot { display: grid; place-items: center; width: 60px; height: 60px; border-radius: 50%; background: #cceef2; color: var(--teal); }
.step-name { padding-bottom: 2px; }
.link { display: block; width: 2px; height: 60px; margin-left: 29px; background: var(--teal); }
.add { display: grid; place-items: center; width: 60px; height: 60px; border-radius: 50%; background: var(--teal); color: #fff; }
.node { height: 60px; padding: 4px; border: 2px solid var(--teal); border-radius: 4px; background: #fff; }
.node-in { display: flex; align-items: center; width: 100%; height: 48px; padding: 0 16px 0 10px; border-radius: 3px; background: var(--teal); color: #fff; }
.node-in span { flex: 1; margin-left: 29px; padding-bottom: 2px; text-align: left; }

.support {
  position: fixed;
  right: 12px;
  bottom: 82px;
  display: grid;
  place-items: center;
  width: 80px;
  height: 80px;
  border-radius: 50%;
  background: var(--teal);
  box-shadow: 0 8px 40px rgba(20, 30, 60, 0.25);
}
```
